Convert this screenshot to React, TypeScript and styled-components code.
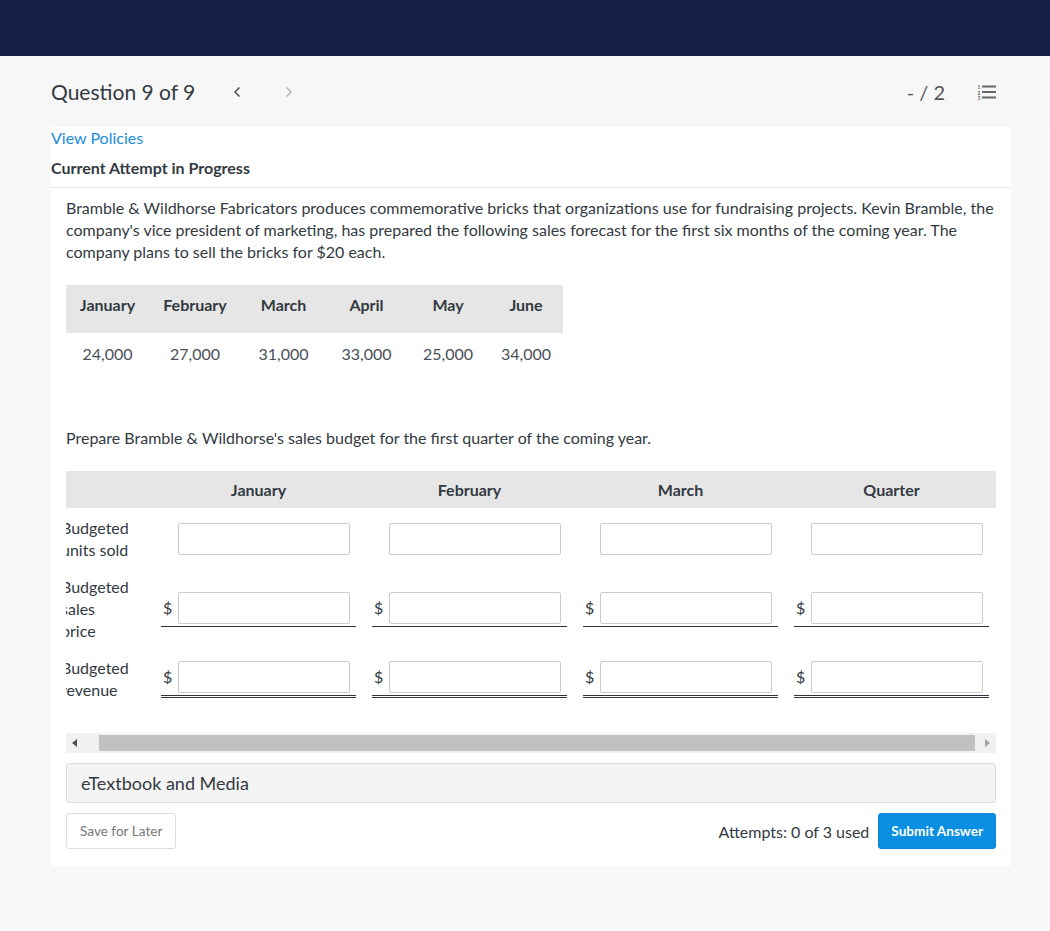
import React from "react";
import styled, { createGlobalStyle } from "styled-components";

const Global = createGlobalStyle`
  html, body { margin: 0; padding: 0; background: #f8f8f8; }
  body { font-family: Lato, "Open Sans", Arial, sans-serif; color: #333a42; }
  * { box-sizing: border-box; }
`;

const TopBar = styled.div`
  height: 56px;
  background: #131f47;
`;

const Header = styled.div`
  height: 71px;
  display: flex;
  align-items: center;
  padding: 0 53px 0 51px;
  background: #f7f7f7;
`;

const Title = styled.div`
  font-size: 21px;
  color: #333a42;
  margin-right: 34px;
`;

const NavButton = styled.button<{ $muted?: boolean }>`
  border: 0;
  background: none;
  padding: 0;
  width: 16px;
  height: 20px;
  margin-right: 36px;
  display: flex;
  align-items: center;
  justify-content: center;
  color: ${(p) => (p.$muted ? "#b5b5b5" : "#555")};
`;

const Spacer = styled.div`
  flex: 1;
`;

const Score = styled.div`
  font-size: 20px;
  color: #555;
  margin-right: 32px;
`;

const Card = styled.div`
  width: 960px;
  margin-left: 51px;
  background: #fff;
  padding-bottom: 17px;
`;

const PolicyLink = styled.a`
  display: block;
  font-size: 16px;
  line-height: 22px;
  color: #1a8cdc;
  text-decoration: none;
`;

const AttemptTitle = styled.div`
  margin-top: 8px;
  font-size: 16px;
  line-height: 22px;
  font-weight: 700;
  color: #333a42;
  padding-bottom: 8px;
  border-bottom: 1px solid #e6e6e6;
`;

const Body = styled.div`
  padding: 0 15px;
`;

const Paragraph = styled.p`
  margin: 9px 0 0;
  font-size: 16px;
  line-height: 22px;
  color: #333a42;
`;

const ForecastGrid = styled.div`
  margin-top: 22px;
  display: grid;
  grid-template-columns: 83px 92px 85px 81px 82px 74px;
  width: 497px;
`;

const ForecastHead = styled.div`
  height: 48px;
  background: #e6e6e6;
  display: flex;
  justify-content: center;
  padding-top: 10px;
  font-size: 16px;
  line-height: 19px;
  font-weight: 700;
  color: #333a42;
`;

const ForecastCell = styled.div`
  height: 40px;
  display: flex;
  align-items: center;
  justify-content: center;
  font-size: 16px;
  color: #4a5058;
`;

const Prompt = styled.p`
  margin: 54px 0 0;
  font-size: 16px;
  line-height: 22px;
  color: #333a42;
`;

const ScrollClip = styled.div`
  margin-top: 22px;
  overflow: hidden;
  width: 930px;
`;

const BudgetGrid = styled.div`
  margin-left: -5px;
  width: 936px;
  display: grid;
  grid-template-columns: 92px repeat(4, 211px);
  grid-template-rows: 37px 62px 78px 62px;
`;

const BudgetHead = styled.div`
  background: #e6e6e6;
  display: flex;
  align-items: center;
  justify-content: center;
  font-size: 16px;
  font-weight: 700;
  color: #333a42;
`;

const RowLabel = styled.div`
  display: flex;
  align-items: center;
  padding-right: 22px;
  font-size: 16px;
  line-height: 22px;
  color: #333a42;
`;

const EntryCell = styled.div`
  display: flex;
  align-items: center;
  padding: 0 8px;
`;

const Entry = styled.div<{ $rule: "none" | "single" | "double" }>`
  width: 195px;
  display: flex;
  align-items: center;
  padding-right: 6px;
  padding-bottom: ${(p) => (p.$rule === "none" ? "0" : "2px")};
  border-bottom: ${(p) =>
    p.$rule === "single"
      ? "1px solid #2d3741"
      : p.$rule === "double"
      ? "3px double #2d3741"
      : "none"};
`;

const Dollar = styled.span<{ $hidden?: boolean }>`
  width: 17px;
  padding-left: 2px;
  font-size: 16px;
  color: #333a42;
  visibility: ${(p) => (p.$hidden ? "hidden" : "visible")};
`;

const Field = styled.input`
  width: 172px;
  height: 32px;
  border: 1px solid #cccccc;
  border-radius: 2px;
  font-family: inherit;
  font-size: 15px;
  padding: 0 6px;
  outline: none;
`;

const ScrollTrack = styled.div`
  margin-top: 23px;
  height: 20px;
  background: #f1f1f1;
  display: flex;
  align-items: stretch;
  padding: 2px 0;
`;

const ScrollArrow = styled.div<{ $disabled?: boolean }>`
  width: 17px;
  display: flex;
  align-items: center;
  justify-content: center;
  color: ${(p) => (p.$disabled ? "#a3a3a3" : "#505050")};
`;

const ScrollThumb = styled.div`
  flex: 1;
  margin: 0 4px 0 16px;
  background: #c1c1c1;
`;

const MediaBar = styled.div`
  margin-top: 10px;
  height: 40px;
  background: #f4f4f4;
  border: 1px solid #dddddd;
  border-radius: 3px;
  display: flex;
  align-items: center;
  padding-left: 14px;
  font-size: 18px;
  color: #333a42;
`;

const Footer = styled.div`
  margin-top: 10px;
  display: flex;
  align-items: center;
`;

const SaveButton = styled.button`
  height: 36px;
  padding: 0 13px;
  background: #fff;
  border: 1px solid #dddddd;
  border-radius: 3px;
  font-family: inherit;
  font-size: 13.6px;
  color: #777;
`;

const Attempts = styled.div`
  font-size: 16px;
  color: #333a42;
  margin-right: 9px;
`;

const SubmitButton = styled.button`
  height: 36px;
  padding: 0 12px;
  background: #0a8ee2;
  border: 1px solid #0a86d6;
  border-radius: 3px;
  font-family: inherit;
  font-size: 13.6px;
  font-weight: 700;
  color: #fff;
`;

const Chevron = ({ dir }: { dir: "left" | "right" }) => (
  <svg width="8" height="12" viewBox="0 0 8 12" fill="none">
    <polyline
      points={dir === "left" ? "6.5,1.5 2,6 6.5,10.5" : "1.5,1.5 6,6 1.5,10.5"}
      stroke="currentColor"
      strokeWidth="1.6"
    />
  </svg>
);

const ListIcon = () => (
  <svg width="20" height="16" viewBox="0 0 20 16">
    <g fill="#666" fontFamily="Lato, sans-serif" fontSize="5" fontWeight="700">
      <text x="0.5" y="5">1</text>
      <text x="0.5" y="10.5">2</text>
      <text x="0.5" y="16">3</text>
    </g>
    <rect x="5" y="1.5" width="14" height="2" fill="#666" />
    <rect x="5" y="7" width="14" height="2" fill="#666" />
    <rect x="5" y="12.5" width="14" height="2" fill="#666" />
  </svg>
);

const Tri = ({ dir }: { dir: "left" | "right" }) => (
  <svg width="5" height="8" viewBox="0 0 5 8">
    <polygon points={dir === "left" ? "5,0 0,4 5,8" : "0,0 5,4 0,8"} fill="currentColor" />
  </svg>
);

const forecast = [
  ["January", "24,000"],
  ["February", "27,000"],
  ["March", "31,000"],
  ["April", "33,000"],
  ["May", "25,000"],
  ["June", "34,000"],
];

const budgetMonths = ["January", "February", "March", "Quarter"];

const rows: { label: string; rule: "none" | "single" | "double"; dollar: boolean }[] = [
  { label: "Budgeted units sold", rule: "none", dollar: false },
  { label: "Budgeted sales price", rule: "single", dollar: true },
  { label: "Budgeted revenue", rule: "double", dollar: true },
];

export default function App() {
  return (
    <>
      <Global />
      <TopBar />
      <Header>
        <Title>Question 9 of 9</Title>
        <NavButton aria-label="Previous">
          <Chevron dir="left" />
        </NavButton>
        <NavButton $muted aria-label="Next">
          <Chevron dir="right" />
        </NavButton>
        <Spacer />
        <Score>- / 2</Score>
        <ListIcon />
      </Header>
      <Card>
        <PolicyLink href="#">View Policies</PolicyLink>
        <AttemptTitle>Current Attempt in Progress</AttemptTitle>
        <Body>
          <Paragraph>
            Bramble &amp; Wildhorse Fabricators produces commemorative bricks that organizations use for
            fundraising projects. Kevin Bramble, the company's vice president of marketing, has prepared
            the following sales forecast for the first six months of the coming year. The company plans
            to sell the bricks for $20 each.
          </Paragraph>
          <ForecastGrid>
            {forecast.map(([m]) => (
              <ForecastHead key={m}>{m}</ForecastHead>
            ))}
            {forecast.map(([m, v]) => (
              <ForecastCell key={m + v}>{v}</ForecastCell>
            ))}
          </ForecastGrid>
          <Prompt>Prepare Bramble &amp; Wildhorse's sales budget for the first quarter of the coming year.</Prompt>
          <ScrollClip>
            <BudgetGrid>
              <BudgetHead />
              {budgetMonths.map((m) => (
                <BudgetHead key={m}>{m}</BudgetHead>
              ))}
              {rows.map((r) => (
                <React.Fragment key={r.label}>
                  <RowLabel>{r.label}</RowLabel>
                  {budgetMonths.map((m) => (
                    <EntryCell key={m}>
                      <Entry $rule={r.rule}>
                        <Dollar $hidden={!r.dollar}>$</Dollar>
                        <Field type="text" />
                      </Entry>
                    </EntryCell>
                  ))}
                </React.Fragment>
              ))}
            </BudgetGrid>
          </ScrollClip>
          <ScrollTrack>
            <ScrollArrow>
              <Tri dir="left" />
            </ScrollArrow>
            <ScrollThumb />
            <ScrollArrow $disabled>
              <Tri dir="right" />
            </ScrollArrow>
          </ScrollTrack>
          <MediaBar>eTextbook and Media</MediaBar>
          <Footer>
            <SaveButton>Save for Later</SaveButton>
            <Spacer />
            <Attempts>Attempts: 0 of 3 used</Attempts>
            <SubmitButton>Submit Answer</SubmitButton>
          </Footer>
        </Body>
      </Card>
    </>
  );
}
